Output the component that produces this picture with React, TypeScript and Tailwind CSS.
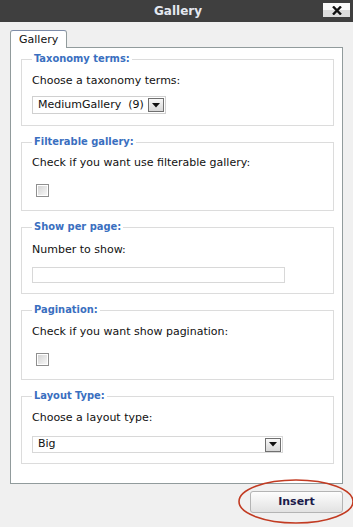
import React from "react";

const font = { fontFamily: '"DejaVu Sans", Verdana, sans-serif' };

function Arrow() {
  return (
    <div className="flex h-[14px] w-[16px] items-center justify-center border border-[#707070] bg-gradient-to-b from-[#f8f8f8] to-[#d8d8d8]">
      <svg width="8" height="5" viewBox="0 0 8 5">
        <path d="M0 0 H8 L4 4.5 Z" fill="#111" />
      </svg>
    </div>
  );
}

function Checkbox() {
  return (
    <div className="ml-[4px] h-[13px] w-[13px] border border-[#8f8f8f] bg-white p-[1px]">
      <div className="h-full w-full bg-gradient-to-br from-[#d4d4d4] to-[#f7f7f7]" />
    </div>
  );
}

function Box({ legend, children, className }: { legend: string; children: React.ReactNode; className?: string }) {
  return (
    <fieldset className={"w-[313px] border border-[#dcdcdc] pl-[10px] " + (className || "")}>
      <legend
        className="px-[2px] text-[11px] font-bold leading-[14px] text-[#3a6fc0]"
        style={{ fontFamily: '"DejaVu Sans Condensed", "DejaVu Sans", sans-serif' }}
      >
        {legend}
      </legend>
      {children}
    </fieldset>
  );
}

export default function App() {
  return (
    <div className="relative h-[527px] w-[353px] overflow-hidden bg-[#f0f0f0] text-[11px] text-[#111]" style={font}>

      {/* TITLE BAR */}
      <div className="relative flex h-[22px] items-center justify-center bg-[#3f3f3f]">
        <span className="pl-[3px] text-[12px] font-bold text-[#e4e8f0]">Gallery</span>
        <div className="absolute left-[323px] top-[3px] flex h-[14px] w-[27px] items-center justify-center bg-gradient-to-b from-[#fafafa] from-50% to-[#dcdcdc] to-50%">
          <svg width="10" height="9" viewBox="0 0 10 9">
            <path d="M1 0.5 L9 8.5 M9 0.5 L1 8.5" stroke="#111" strokeWidth="2.4" />
          </svg>
        </div>
      </div>

      <div className="px-[10px] pt-[8px]">

        {/* TAB */}
        <div className="relative z-10 -mb-px flex h-[18px] w-[57px] items-center rounded-t-[3px] border border-b-0 border-[#919b9c] border-t-[#7f8da8] bg-white pl-[8px] leading-[14px]">
          Gallery
        </div>

        {/* PANEL */}
        <div className="h-[437px] w-[333px] border border-[#919b9c] bg-white px-[10px] pt-[4px]">

          <Box legend="Taxonomy terms:">
            <div className="mt-[8px] leading-[14px]">Choose a taxonomy terms:</div>
            <div className="mb-[11px] mt-[8px] flex h-[18px] w-[134px] items-center justify-between border border-[#d0d0d0] pl-[5px] pr-[1px]">
              <span className="whitespace-pre">MediumGallery  (9)</span>
              <Arrow />
            </div>
          </Box>

          <Box legend="Filterable gallery:" className="mt-[9px]">
            <div className="mt-[7px] leading-[14px]">Check if you want use filterable gallery:</div>
            <div className="mb-[13px] mt-[14px]">
              <Checkbox />
            </div>
          </Box>

          <Box legend="Show per page:" className="mt-[9px]">
            <div className="mt-[9px] leading-[14px]">Number to show:</div>
            <div className="mb-[10px] mt-[10px] h-[16px] w-[253px] border border-[#d8d8d8]" />
          </Box>

          <Box legend="Pagination:" className="mt-[9px]">
            <div className="mt-[8px] leading-[14px]">Check if you want show pagination:</div>
            <div className="mb-[13px] mt-[14px]">
              <Checkbox />
            </div>
          </Box>

          <Box legend="Layout Type:" className="mt-[9px]">
            <div className="mt-[8px] leading-[14px]">Choose a layout type:</div>
            <div className="mb-[10px] mt-[11px] flex h-[17px] w-[251px] items-center justify-between border border-[#d8d8d8] pl-[5px] pr-[1px]">
              <span>Big</span>
              <Arrow />
            </div>
          </Box>

        </div>

        {/* INSERT */}
        <div className="mt-[7px] flex justify-end">
          <button className="h-[22px] w-[93px] rounded-[3px] border border-[#b4b4b4] bg-gradient-to-b from-[#fdfdfd] to-[#e2e2e2] text-[11px] font-bold text-[#1b1b4a]">
            Insert
          </button>
        </div>
      </div>

      {/* annotation */}
      <svg className="pointer-events-none absolute left-0 top-0" width="353" height="527">
        <ellipse cx="296" cy="501.5" rx="57" ry="21.5" fill="none" stroke="#c23b22" strokeWidth="1.6" />
      </svg>
    </div>
  );
}
